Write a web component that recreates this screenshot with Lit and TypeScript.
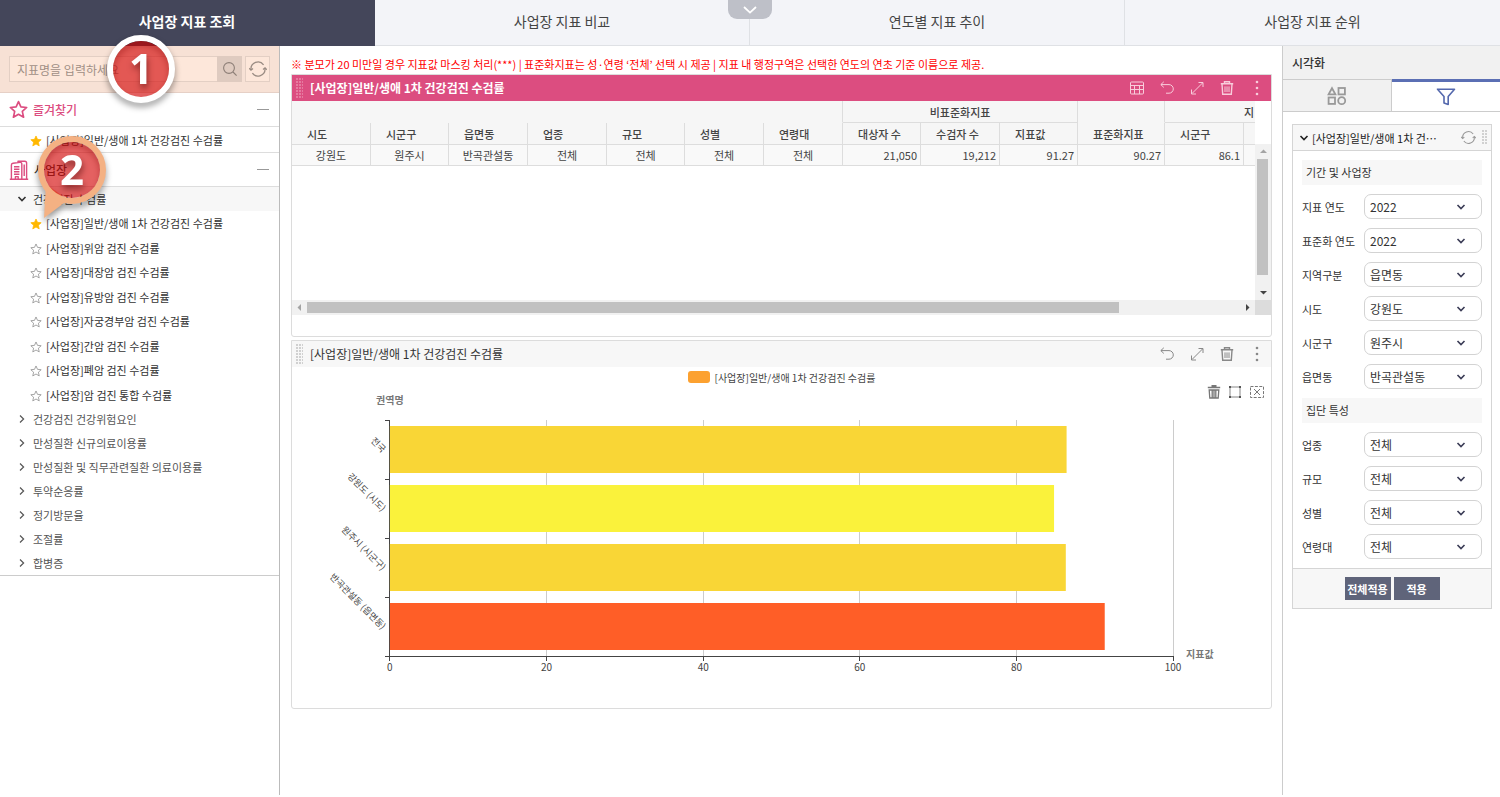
import { LitElement, html, css, svg, nothing } from "lit";
import { customElement, property, state } from "lit/decorators.js";
import { classMap } from "lit/directives/class-map.js";

const FONT = css`"Noto Sans CJK KR", "Noto Sans", sans-serif`;
const INDICATOR = "[사업장]일반/생애 1차 건강검진 수검률";

const chevronDown = html`<svg width="10" height="10" viewBox="0 0 10 10" fill="none" stroke="currentColor" stroke-width="1.6" aria-hidden="true"><path d="M1.5 3 5 6.6 8.5 3" /></svg>`;
const chevronRight = html`<svg width="10" height="10" viewBox="0 0 10 10" fill="none" stroke="currentColor" stroke-width="1.2" aria-hidden="true"><path d="M3 1.5 6.6 5 3 8.5" /></svg>`;
const starPath = "M8 1.3 10 5.8 14.9 6.3 11.2 9.6 12.3 14.5 8 12 3.7 14.5 4.8 9.6 1.1 6.3 6 5.8Z";
const star = (size: number, stroke: string, fill: string, width: number) =>
  html`<svg width=${size} height=${size} viewBox="0 0 16 16" fill=${fill} stroke=${stroke} stroke-width=${width} stroke-linejoin="round" aria-hidden="true"><path d=${starPath} /></svg>`;
const building = html`<svg width="20" height="20" viewBox="0 0 20 20" fill="none" stroke="#dc4d80" stroke-width="1.4" stroke-linejoin="round" aria-hidden="true">
  <path d="M.8 19.2h18.4M2.4 19V5Q2.4 3.4 4 3.2L11 2.4Q12.8 2.2 12.8 4V19M9 2.5V1.2h6.8Q17.6 1.2 17.6 3V19" />
  <path d="M5 6.7h5.4M5 9.2h5.4M5 11.7h5.4M5 14.2h5.4M6.4 19v-2.4h2.8V19M15.2 4.5v11.5" /></svg>`;
const magnifier = html`<svg width="18" height="18" viewBox="0 0 18 18" fill="none" stroke="#8d7f77" stroke-width="1.1" aria-hidden="true"><circle cx="8" cy="8" r="5.4" /><path d="m12 12 3.6 3.6" /></svg>`;
const refresh = (size: number) => html`<svg width=${size} height=${size} viewBox="0 0 18 18" fill="none" stroke="currentColor" stroke-width="1.3" aria-hidden="true">
  <path d="M2 9.5A7 7 0 0 1 14.6 4.8M16 8.5A7 7 0 0 1 3.4 13.2" /><path d="M.2 8.2 2 10.2 4 8.6M14 9.4 16 7.8l1.8 2" /></svg>`;
const tableIcon = html`<svg width="16" height="16" viewBox="0 0 16 16" fill="none" stroke="currentColor" aria-hidden="true"><rect x="1.5" y="2" width="13" height="12" rx="1" /><path d="M1.5 5.5h13M1.5 9.5h13M5.5 5.5V14M10.5 5.5V14" /></svg>`;
const undoIcon = html`<svg width="16" height="16" viewBox="0 0 16 16" fill="none" stroke="currentColor" aria-hidden="true"><path d="M4.8 1.8 1.8 4.6 4.8 7.4M2 4.6H10A4.3 4.3 0 0 1 10 13.2H7" /></svg>`;
const expandIcon = html`<svg width="16" height="16" viewBox="0 0 16 16" fill="none" stroke="currentColor" aria-hidden="true"><path d="M3 13.5 13.5 3M9.5 2.5h4.5V7M7 14H2.5V9.5" /></svg>`;
const trashIcon = html`<svg width="16" height="16" viewBox="0 0 16 16" fill="none" stroke="currentColor" stroke-width="1.4" aria-hidden="true"><path d="M1.8 3.8h12.4M5.5 3.6V1.7h5v1.9M3 4l.7 10.2h8.6L13 4" /><path d="M6 6.4V12M8 6.4V12M10 6.4V12" stroke-width="1" /></svg>`;
const moreIcon = html`<svg width="6" height="16" viewBox="0 0 6 16" fill="currentColor" aria-hidden="true"><circle cx="3" cy="2" r="1.3" /><circle cx="3" cy="8" r="1.3" /><circle cx="3" cy="14" r="1.3" /></svg>`;
const solidTrash = html`<svg width="14" height="14" viewBox="0 0 14 14" fill="none" stroke="#777" aria-hidden="true"><path d="M.8 2.5h12.4M4.5.9h5" stroke-width="1.6" /><path d="M2.2 5h9.6L11.2 13H2.8ZM5.2 5v8M7 5v8M8.8 5v8" stroke-width="1.3" /></svg>`;
const boxSelect = html`<svg width="14" height="14" viewBox="0 0 14 14" fill="none" stroke="#888" aria-hidden="true"><rect x="2" y="2" width="10" height="10" /><path d="M1 2h2M11 2h2M1 12h2M11 12h2" stroke="#555" stroke-width="2" /></svg>`;
const boxClear = html`<svg width="16" height="14" viewBox="0 0 16 14" fill="none" stroke="#777" aria-hidden="true"><rect x="1.5" y="1.5" width="13" height="11" stroke-dasharray="3 1.4" /><path d="m5 4 6 6M11 4l-6 6" /></svg>`;
const shapesIcon = html`<svg width="20" height="20" viewBox="0 0 20 20" fill="none" stroke="#999" stroke-width="1.8" aria-hidden="true"><path d="M5 2.2 8.4 8.4H1.6Z" /><rect x="11.5" y="2" width="6.4" height="6.4" /><rect x="1.6" y="11.5" width="6.4" height="6.4" /><circle cx="14.7" cy="14.7" r="3.5" /></svg>`;
const funnelIcon = html`<svg width="20" height="20" viewBox="0 0 20 20" fill="none" stroke="#5468ad" stroke-width="1.6" stroke-linejoin="round" aria-hidden="true"><path d="M1.5 2.2h17L12.2 9.5v8L8 16V9.5Z" /></svg>`;

@customElement("step-callout")
class StepCallout extends LitElement {
  static styles = css`
    :host { display: block; }
    .shape { display: block; overflow: visible; }
    .rim { filter: drop-shadow(0 4px 3px rgba(0, 0, 0, 0.4)); }
    .num { font: 700 42px "Open Sans", "Noto Sans", sans-serif; fill: #fff; filter: drop-shadow(1px 4px 3px rgba(60, 0, 0, 0.5)); }
  `;
  @property() label = "";
  @property({ type: Boolean }) tail = false;
  render() {
    return html`<svg class="shape" width="68" height="84" viewBox="0 0 68 84">
      <g class="rim">
        ${this.tail ? svg`<path d="M6 82 8 48 30 64Z" fill="#f4b183" />` : nothing}
        <circle cx="34" cy="34" r="31" fill="none" stroke=${this.tail ? "#f4b183" : "#fff"} stroke-width="6" />
      </g>
      <circle cx="34" cy="34" r="28" fill="rgb(212,8,8)" fill-opacity=".64" />
      <text class="num" x="34" y="49" text-anchor="middle">${this.label}</text>
    </svg>`;
  }
}

@customElement("indicator-tree")
class IndicatorTree extends LitElement {
  static styles = css`
    :host { display: block; font: 11px/24px ${FONT}; color: #333; }
    .search { display: flex; align-items: center; height: 47px; padding: 0 9px; gap: 3px; background: #f7e1d5; border-bottom: 1px solid #e6d0c6; box-sizing: border-box; }
    .field { display: flex; flex: 1; height: 26px; min-width: 0; }
    .query { flex: 1; min-width: 0; box-sizing: border-box; border: 1px solid #e3cfc4; border-right: 0; background: #fde7da; padding: 0 7px; font: 12px ${FONT}; color: #555; }
    .query::placeholder { color: #a08f85; opacity: 1; }
    .find, .reload { display: grid; place-items: center; padding: 0; width: 25px; height: 26px; box-sizing: border-box; border: 0; background: #dfcbc0; }
    .reload { background: #fde7da; border: 1px solid #e3cfc4; color: #998b82; }
    .group { display: flex; align-items: center; gap: 5px; width: 100%; height: 34px; padding: 0 10px 0 9px; border: 0; border-bottom: 1px solid #ddd; background: #fff; font: 500 12px ${FONT}; color: #dc4d80; box-sizing: border-box; text-align: left; }
    .dark { color: #333; }
    .name { flex: 1; }
    .dash { width: 12px; height: 1px; background: #999; }
    .list { list-style: none; margin: 0; padding: 0; }
    .fav { padding: 1px 0 0; border-bottom: 1px solid #ddd; }
    .leaves { display: flex; flex-direction: column; justify-content: space-between; height: 196px; }
    .leaf { display: flex; align-items: center; gap: 4px; padding-left: 30px; height: 24px; color: #333; text-decoration: none; white-space: nowrap; }
    .leaf svg { margin-top: 2px; }
    .cats { border-bottom: 1px solid #ccc; }
    .cat { display: flex; align-items: center; gap: 6px; width: 100%; height: 24px; padding: 0 0 0 17px; border: 0; background: none; font: 11px ${FONT}; color: #555; white-space: nowrap; }
    .open { background: #f7f7f7; color: #333; }
  `;
  private leaves = ["일반/생애 1차 건강검진 수검률", "위암 검진 수검률", "대장암 검진 수검률", "유방암 검진 수검률", "자궁경부암 검진 수검률", "간암 검진 수검률", "폐암 검진 수검률", "암 검진 통합 수검률"];
  private categories = ["건강검진 건강위험요인", "만성질환 신규의료이용률", "만성질환 및 직무관련질환 의료이용률", "투약순응률", "정기방문율", "조절률", "합병증"];
  private leaf(name: string, on: boolean) {
    return html`<li><a class="leaf" href="#">${on ? star(12, "#ffb800", "#ffb800", 1) : star(12, "#888", "none", 1)}<span>[사업장]${name}</span></a></li>`;
  }
  render() {
    return html`
      <div class="search">
        <div class="field">
          <input class="query" type="text" aria-label="지표명" placeholder="지표명을 입력하세요" />
          <button class="find" aria-label="검색">${magnifier}</button>
        </div>
        <button class="reload" aria-label="초기화">${refresh(18)}</button>
      </div>
      <button class="group">${star(19, "#dc4d80", "none", 1.4)}<span class="name">즐겨찾기</span><span class="dash"></span></button>
      <ul class="list fav">${this.leaf(this.leaves[0], true)}</ul>
      <button class="group dark">${building}<span class="name">사업장</span><span class="dash"></span></button>
      <button class="cat open">${chevronDown}<span>건강검진 수검률</span></button>
      <ul class="list leaves">${this.leaves.map((l, i) => this.leaf(l, i === 0))}</ul>
      <ul class="list cats">${this.categories.map((c) => html`<li><button class="cat">${chevronRight}<span>${c}</span></button></li>`)}</ul>
    `;
  }
}

@customElement("widget-card")
class WidgetCard extends LitElement {
  static styles = css`
    :host { display: block; border: 1px solid #dcdcdc; border-radius: 0 0 3px 3px; background: #fff; }
    .bar { display: flex; align-items: center; height: 26px; padding: 0 11px 0 4px; background: #f7f7f7; color: #888; }
    .accent { background: #dc4d80; color: #f8cddb; }
    .grip { width: 7px; height: 20px; background: radial-gradient(circle at 1px 1px, currentColor 0 0.5px, transparent 1px) 0 0 / 3px 3px; opacity: 0.6; }
    .title { flex: 1; margin: 0 0 0 7px; font: 12px/26px ${FONT}; color: #333; white-space: nowrap; }
    .accent .title { color: #fff; font-weight: 700; }
    .tools { display: flex; align-items: center; gap: 14px; }
    .tool { display: grid; padding: 0; border: 0; background: none; color: inherit; }
    .more { margin-left: 5px; }
  `;
  @property() heading = "";
  @property({ type: Boolean }) selected = false;
  render() {
    return html`<header class=${classMap({ bar: true, accent: this.selected })}>
        <span class="grip"></span>
        <h2 class="title">${this.heading}</h2>
        <div class="tools">
          ${this.selected ? html`<button class="tool" aria-label="표">${tableIcon}</button>` : nothing}
          <button class="tool" aria-label="되돌리기">${undoIcon}</button>
          <button class="tool" aria-label="확대">${expandIcon}</button>
          <button class="tool" aria-label="삭제">${trashIcon}</button>
          <button class="tool more" aria-label="더보기">${moreIcon}</button>
        </div>
      </header>
      <slot></slot>`;
  }
}

@customElement("result-grid")
class ResultGrid extends LitElement {
  static styles = css`
    :host { display: grid; grid-template-columns: minmax(0, 1fr) 16px; grid-template-rows: 199px 15px; padding-bottom: 21px; font: 11px ${FONT}; color: #444; }
    .view { overflow: hidden; }
    .grid { border-collapse: separate; border-spacing: 0; table-layout: fixed; width: 1031px; }
    .key { width: 79px; }
    .slim { width: 78px; }
    .wide { width: 87px; }
    .grid th, .grid td { box-sizing: border-box; height: 21px; padding: 0; border-right: 1px solid #ddd; border-bottom: 1px solid #ddd; background: #f6f6f6; overflow: hidden; white-space: nowrap; }
    .grid th { height: 22px; text-align: left; padding-left: 15px; font-weight: 500; }
    .grid th.blank { border-bottom-color: #f6f6f6; }
    .grid th.mid { text-align: center; padding-left: 0; }
    .grid th.cut { padding-left: 79px; }
    .grid td { text-align: center; background: #f9f9f9; }
    .grid td.num { text-align: right; padding-right: 3px; }
    .track { display: flex; background: #f1f1f1; color: #444; }
    .up-down { flex-direction: column; align-items: center; margin-top: 43px; }
    .side { align-items: center; }
    .end { display: grid; place-items: center; width: 15px; height: 15px; flex: none; }
    .faint { color: #a3a3a3; }
    .run { flex: 1; align-self: stretch; }
    .thumb { box-sizing: border-box; background: #c1c1c1; background-clip: content-box; }
    .up-down .thumb { height: 92%; padding: 0 2px; }
    .side .thumb { width: 87%; height: 15px; padding: 2px 0; }
    .corner { background: #dcdcdc; }
  `;
  private arrow(points: string) {
    return html`<svg width="7" height="7" viewBox="0 0 7 7" fill="currentColor" aria-hidden="true"><path d=${points} /></svg>`;
  }
  render() {
    const heads = ["시도", "시군구", "읍면동", "업종", "규모", "성별", "연령대", "대상자 수", "수검자 수", "지표값", "표준화지표", "시군구", ""];
    const widths = ["key", "slim", "key", "key", "slim", "key", "key", "slim", "key", "slim", "wide", "key", "key"];
    const row = ["강원도", "원주시", "반곡관설동", "전체", "전체", "전체", "전체", "21,050", "19,212", "91.27", "90.27", "86.1", ""];
    return html`
      <div class="view">
        <table class="grid">
          <colgroup>${widths.map((w) => html`<col class=${w} />`)}</colgroup>
          <thead>
            <tr><th class="blank" colspan="7"></th><th class="mid" colspan="3">비표준화지표</th><th class="blank"></th><th class="cut" colspan="2">지</th></tr>
            <tr>${heads.map((h) => html`<th>${h}</th>`)}</tr>
          </thead>
          <tbody><tr>${row.map((v, i) => html`<td class=${i > 6 ? "num" : ""}>${v}</td>`)}</tr></tbody>
        </table>
      </div>
      <div class="track up-down">
        <span class="end faint">${this.arrow("M0 5 3.5 1.5 7 5Z")}</span>
        <div class="run"><div class="thumb" style="width:15px"></div></div>
        <span class="end">${this.arrow("M0 2 3.5 5.5 7 2Z")}</span>
      </div>
      <div class="track side">
        <span class="end faint">${this.arrow("M5 0 1.5 3.5 5 7Z")}</span>
        <div class="run"><div class="thumb"></div></div>
        <span class="end">${this.arrow("M2 0 5.5 3.5 2 7Z")}</span>
      </div>
      <div class="corner"></div>
    `;
  }
}

@customElement("region-chart")
class RegionChart extends LitElement {
  static styles = css`
    :host { display: block; position: relative; font: 10px ${FONT}; }
    .legend { display: flex; align-items: center; justify-content: center; gap: 5px; height: 20px; color: #444; }
    .swatch { width: 22px; height: 12px; border-radius: 3px; background: #fca130; }
    .toolbox { position: absolute; top: 18px; right: 6px; display: flex; gap: 7px; }
    .tool { display: grid; padding: 0; border: 0; background: none; }
    .plot { display: block; width: 100%; height: 320px; }
    .axis { stroke: #444; stroke-width: 1; shape-rendering: crispEdges; }
    .line { stroke: #ccc; shape-rendering: crispEdges; }
    .tick { font-size: 10px; fill: #444; text-anchor: middle; }
    .cat { font-size: 9px; fill: #444; text-anchor: end; }
    .name { font-size: 10px; font-weight: 700; fill: #777; }
    .center { text-anchor: middle; }
  `;
  private data = [
    { name: "전국", value: 86.4, color: "#f9d636" },
    { name: "강원도 (시도)", value: 84.8, color: "#faf23b" },
    { name: "원주시 (시군구)", value: 86.3, color: "#f9d636" },
    { name: "반곡관설동 (읍면동)", value: 91.27, color: "#ff5e27" },
  ];
  render() {
    const x = (v: number) => `${10 + v * 0.8}%`;
    return html`
      <div class="legend"><span class="swatch"></span><span>${INDICATOR}</span></div>
      <div class="toolbox">
        <button class="tool" aria-label="지우기">${solidTrash}</button>
        <button class="tool" aria-label="영역 선택">${boxSelect}</button>
        <button class="tool" aria-label="선택 해제">${boxClear}</button>
      </div>
      <svg class="plot" role="img" aria-label=${INDICATOR}>
        <text class="name center" x="10%" y="17">권역명</text>
        ${[20, 40, 60, 80, 100].map((v) => svg`<line class="line" x1=${x(v)} x2=${x(v)} y1="33" y2="269" />`)}
        <line class="axis" x1="10%" x2="10%" y1="33" y2="269" />
        ${this.data.map((d, i) => svg`
          <rect x="10%" y=${39 + i * 59} width=${`${d.value * 0.8}%`} height="47" fill=${d.color} />
          <svg x="10%" y=${62 + i * 59} overflow="visible"><text class="cat" transform="translate(-8 4) rotate(45)">${d.name}</text></svg>`)}
        ${[0, 1, 2, 3, 4].map((i) => svg`<svg x="10%" y=${33 + i * 59} overflow="visible"><line class="axis" x1="-5" x2="0" y1="0" y2="0" /></svg>`)}
        <line class="axis" x1="10%" x2="90%" y1="269" y2="269" />
        ${[0, 20, 40, 60, 80, 100].map((v) => svg`<line class="axis" x1=${x(v)} x2=${x(v)} y1="269" y2="274" /><text class="tick" x=${x(v)} y="284">${v}</text>`)}
        <svg x="90%" y="270" overflow="visible"><text class="name" x="13" y="1">지표값</text></svg>
      </svg>
    `;
  }
}

@customElement("filter-panel")
class FilterPanel extends LitElement {
  static styles = css`
    :host { display: block; font: 11px ${FONT}; color: #333; }
    .title { margin: 0; padding-left: 9px; background: #f1f1f1; font: 500 12px/33px ${FONT}; }
    .tabs { display: grid; grid-template-columns: 1fr 1fr; height: 33px; }
    .tab { display: grid; place-items: center; padding: 0; border: 1px solid #ccc; border-width: 1px 1px 1px 0; background: #f1f1f1; }
    .on { border: 0; border-top: 3px solid #5b6fb4; border-bottom: 1px solid #ccc; background: #fff; }
    .card { margin: 12px 8px 0 9px; border: 1px solid #d5d5d5; }
    .head { display: flex; align-items: center; gap: 3px; height: 25px; padding: 0 3px 0 6px; border-bottom: 1px solid #d5d5d5; background: #f7f7f7; color: #222; }
    .label { flex: 1; white-space: nowrap; }
    .reload { display: grid; padding: 0; border: 0; background: none; color: #999; }
    .grip { width: 6px; height: 15px; margin-left: 3px; color: #999; background: radial-gradient(circle at 1px 1px, currentColor 0 0.5px, transparent 1px) 0 0 / 3px 3px; opacity: 0.7; }
    .form { display: grid; gap: 9px; padding: 9px; }
    .section { margin: 0; padding-left: 4px; background: #f7f7f7; font: 400 11px/25px ${FONT}; }
    .row { display: grid; grid-template-columns: minmax(0, 1fr) 118px; align-items: center; height: 25px; }
    .pick { display: grid; align-items: center; }
    .pick select, .pick svg { grid-area: 1 / 1; }
    .pick svg { justify-self: end; margin-right: 16px; color: #3b3c56; pointer-events: none; }
    .choice { appearance: none; width: 100%; height: 25px; padding: 0 5px; border: 1px solid #d3d3d3; border-radius: 7px; background: #fff; font: 12px ${FONT}; color: #333; }
    .foot { display: flex; justify-content: center; gap: 3px; padding: 8px; border-top: 1px solid #d5d5d5; background: #f7f7f7; }
    .apply { width: 46px; height: 23px; padding: 0; border: 0; background: #5f647a; color: #fff; font: 700 11px ${FONT}; }
  `;
  private sections = [
    { title: "기간 및 사업장", rows: [["지표 연도", "2022"], ["표준화 연도", "2022"], ["지역구분", "읍면동"], ["시도", "강원도"], ["시군구", "원주시"], ["읍면동", "반곡관설동"]] },
    { title: "집단 특성", rows: [["업종", "전체"], ["규모", "전체"], ["성별", "전체"], ["연령대", "전체"]] },
  ];
  render() {
    return html`
      <h2 class="title">시각화</h2>
      <div class="tabs">
        <button class="tab" aria-label="시각화 유형">${shapesIcon}</button>
        <button class="tab on" aria-label="필터">${funnelIcon}</button>
      </div>
      <section class="card">
        <div class="head">${chevronDown}<span class="label">[사업장]일반/생애 1차 건⋯</span><button class="reload" aria-label="초기화">${refresh(15)}</button><span class="grip"></span></div>
        <div class="form">
          ${this.sections.map((s) => html`<h3 class="section">${s.title}</h3>
            ${s.rows.map(([name, value]) => html`<label class="row"><span>${name}</span><span class="pick"><select class="choice"><option>${value}</option></select>${chevronDown}</span></label>`)}`)}
        </div>
        <div class="foot"><button class="apply">전체적용</button><button class="apply">적용</button></div>
      </section>
    `;
  }
}

@customElement("app-root")
class AppRoot extends LitElement {
  static styles = css`
    :host { display: flex; flex-direction: column; position: relative; box-sizing: border-box; min-height: 100vh; padding-bottom: 2px; background: #fff; font-family: ${FONT}; }
    .nav { position: relative; display: grid; grid-template-columns: repeat(4, 1fr); height: 46px; }
    .tab { padding: 0 0 4px; border: 0; border-right: 1px solid #dfe1e5; border-bottom: 1px solid #dfe1e5; background: #f3f4f8; color: #444; font: 14px ${FONT}; }
    .tab:last-of-type { border-right: 0; }
    .active { background: #44465a; border-color: #44465a; color: #fff; font-weight: 700; }
    .pull { position: absolute; top: 0; left: 50%; transform: translateX(-50%); display: grid; place-items: center; width: 44px; height: 19px; padding: 0; border: 0; border-radius: 0 0 9px 9px; background: #bec0c8; }
    .body { flex: 1; display: grid; grid-template-columns: 279px minmax(0, 1fr) 218px; }
    .left { border-right: 1px solid #bbb; margin-right: -1px; }
    .main { padding: 10px 10px 0 12px; }
    .right { border-left: 1px solid #ccc; }
    .note { margin: 0 0 2px; font: 11px/16px ${FONT}; color: #f00; white-space: nowrap; }
    .lower { margin-top: 3px; }
    .chart { padding-bottom: 1px; }
    .one, .two { position: absolute; pointer-events: none; }
    .one { left: 107px; top: 35px; }
    .two { left: 38px; top: 136px; }
  `;
  @state() private active = 0;
  private tabs = ["사업장 지표 조회", "사업장 지표 비교", "연도별 지표 추이", "사업장 지표 순위"];
  render() {
    return html`
      <nav class="nav">
        ${this.tabs.map((t, i) => html`<button class=${classMap({ tab: true, active: i === this.active })} @click=${() => (this.active = i)}>${t}</button>`)}
        <span class="pull"><svg width="14" height="8" viewBox="0 0 14 8" fill="none" stroke="#fff" stroke-width="1.8" aria-hidden="true"><path d="m1 1 6 5.6L13 1" /></svg></span>
      </nav>
      <div class="body">
        <aside class="left"><indicator-tree></indicator-tree></aside>
        <main class="main">
          <p class="note">※ 분모가 20 미만일 경우 지표값 마스킹 처리(***) | 표준화지표는 성·연령 ‘전체’ 선택 시 제공 | 지표 내 행정구역은 선택한 연도의 연초 기준 이름으로 제공.</p>
          <widget-card selected .heading=${INDICATOR}><result-grid></result-grid></widget-card>
          <widget-card class="lower" .heading=${INDICATOR}><region-chart class="chart"></region-chart></widget-card>
        </main>
        <aside class="right"><filter-panel></filter-panel></aside>
      </div>
      <step-callout class="one" label="1"></step-callout>
      <step-callout class="two" label="2" tail></step-callout>
    `;
  }
}
